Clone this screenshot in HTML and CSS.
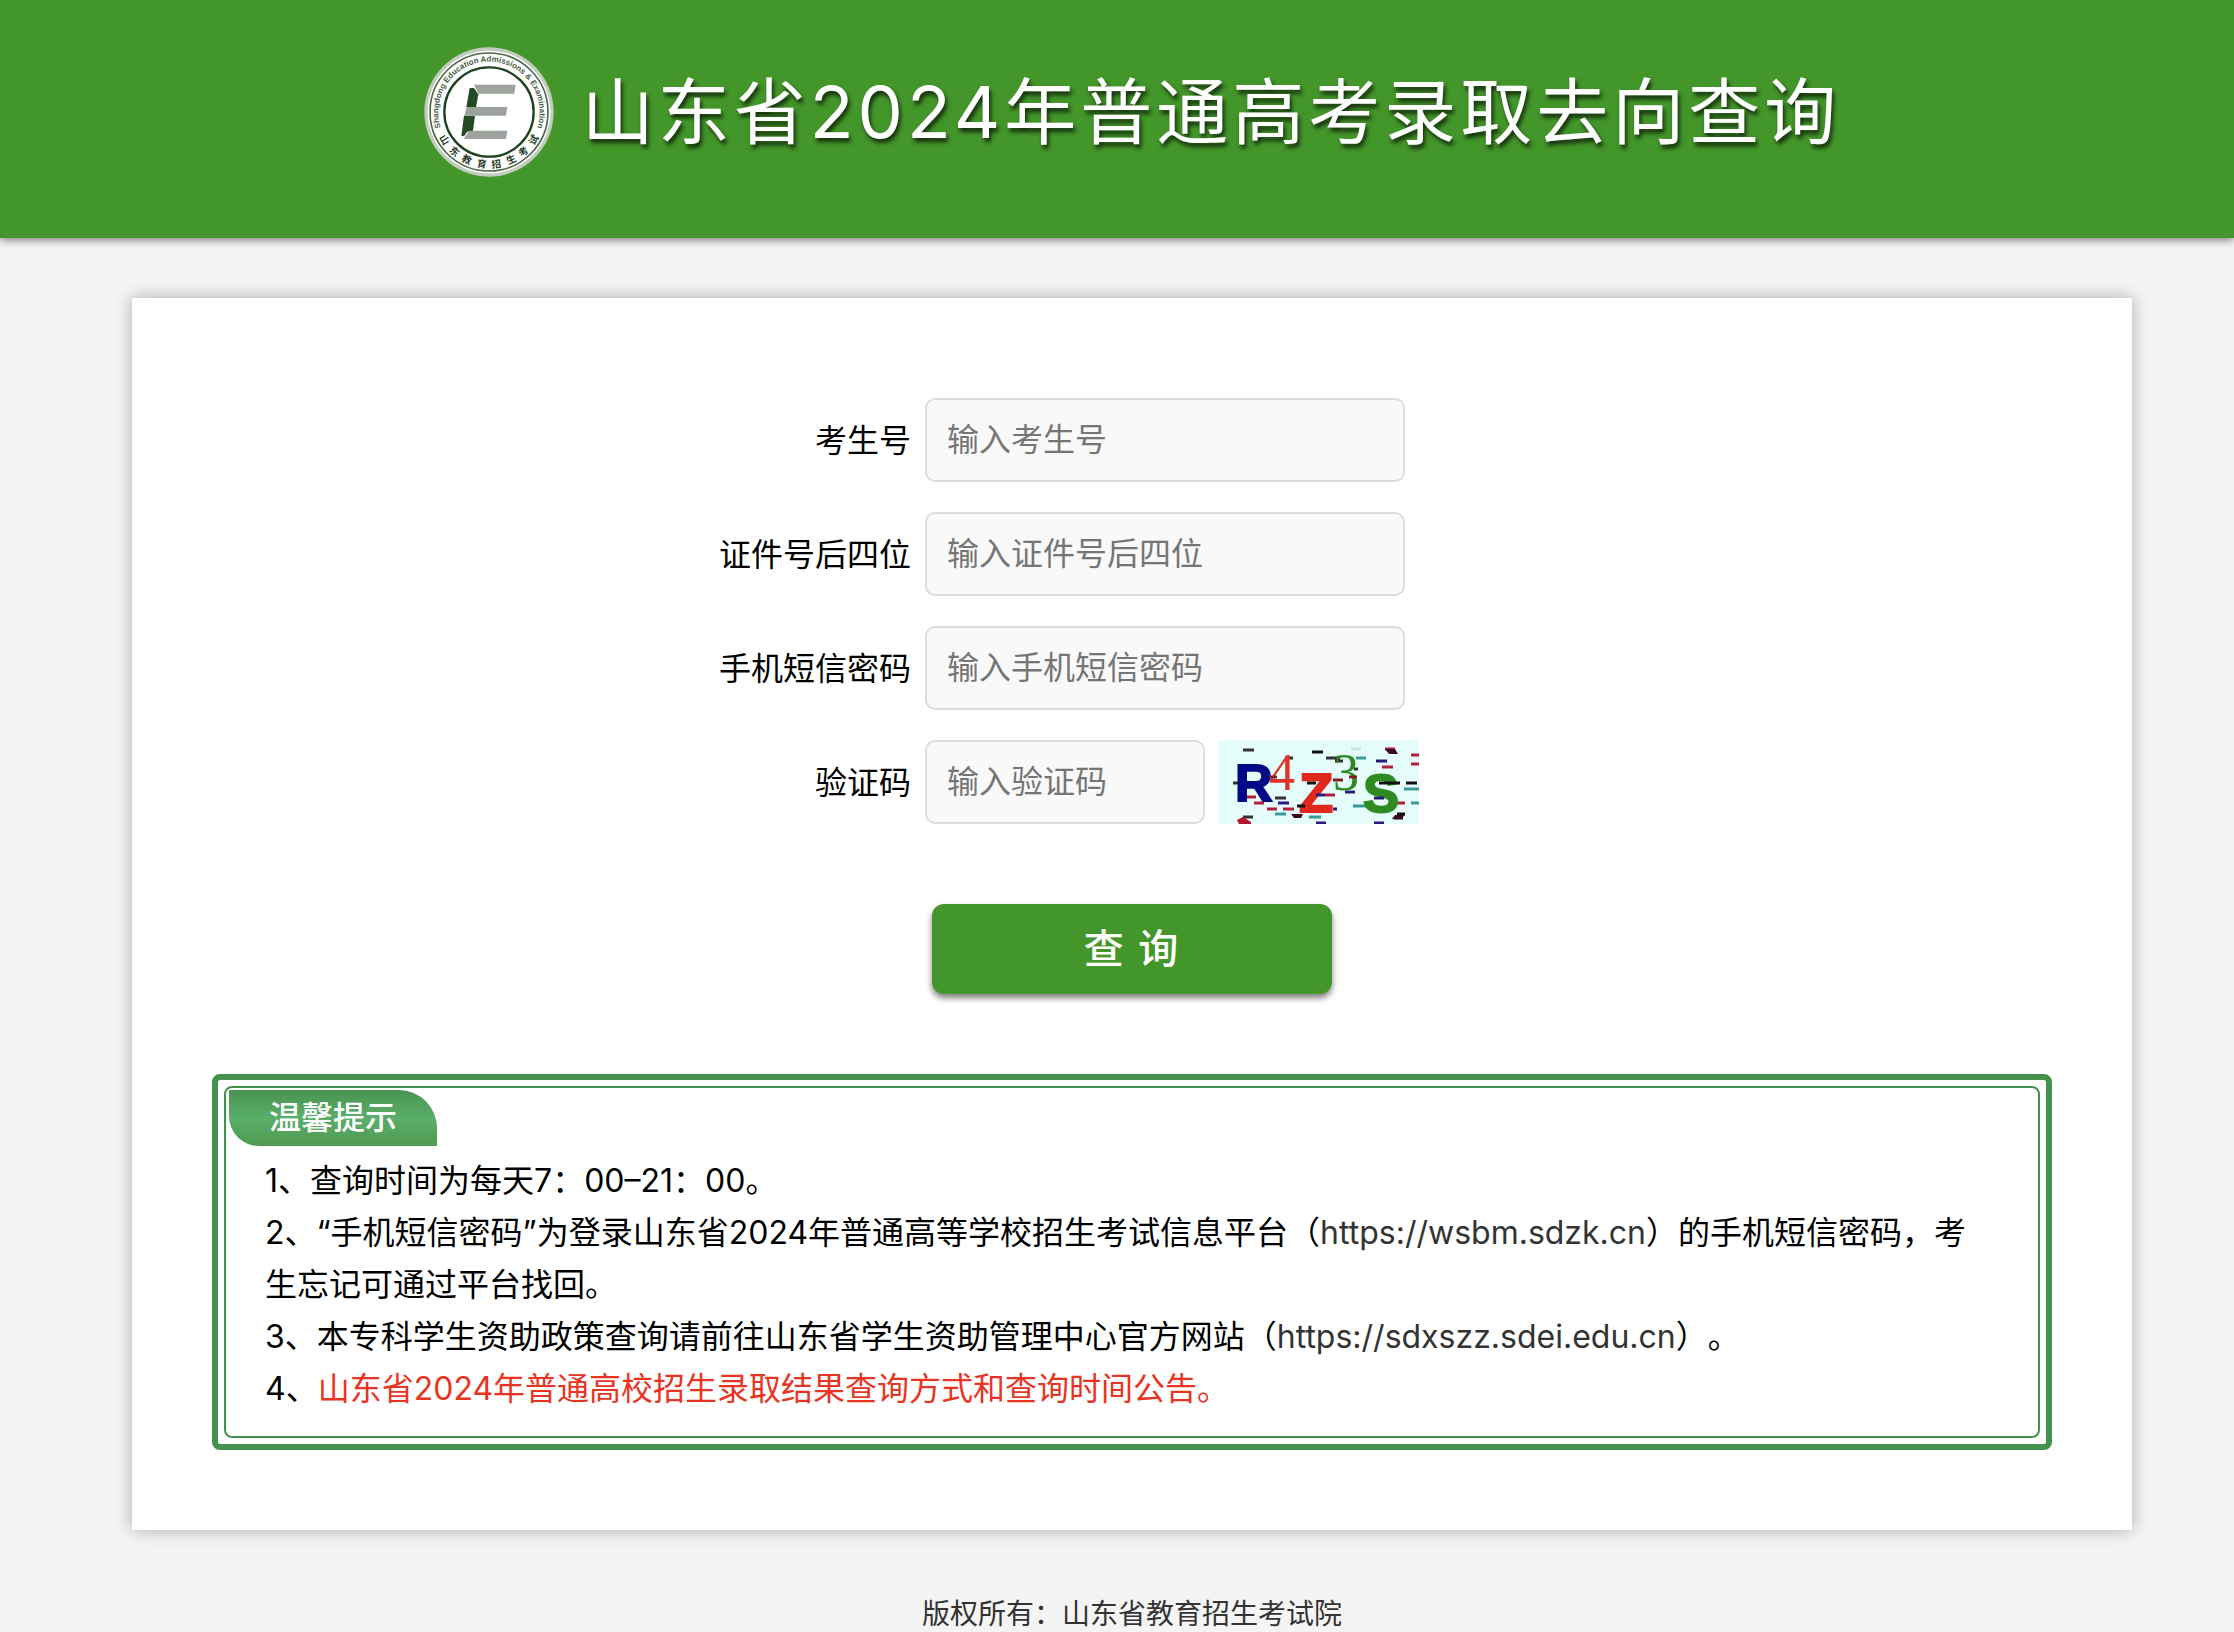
FILE: index.html
```html
<!DOCTYPE html>
<html lang="zh-CN">
<head>
    <meta charset="UTF-8">
    <meta name="viewport" content="width=device-width, initial-scale=1.0">
    <title>山东省2024年普通高考录取去向查询</title>
    <link rel="stylesheet" href="styles.css">
</head>
<body>

    <header class="header">
        <svg class="logo" viewBox="0 0 390 390" role="img" aria-label="山东省教育招生考试院">
            <defs>
                <path id="ring" d="M 51.5 246 A 152 152 0 1 1 338.5 246"/>
            </defs>
            <circle cx="195" cy="195" r="194" fill="#c3cdbf"/>
            <circle cx="195" cy="195" r="184" fill="#fff"/>
            <circle cx="195" cy="195" r="177" fill="none" stroke="#4c6849" stroke-width="5"/>
            <circle cx="195" cy="195" r="134" fill="none" stroke="#1f4220" stroke-width="7"/>
            <text class="ring-en"><textPath href="#ring" startOffset="50%" text-anchor="middle">Shangdong Education Admissions &amp; Examination</textPath></text>
            <g class="ring-cn">
                <text x="195" y="363" transform="rotate(58 195 195)">山</text>
                <text x="195" y="363" transform="rotate(41 195 195)">东</text>
                <text x="195" y="363" transform="rotate(25 195 195)">教</text>
                <text x="195" y="363" transform="rotate(8 195 195)">育</text>
                <text x="195" y="363" transform="rotate(-8 195 195)">招</text>
                <text x="195" y="363" transform="rotate(-25 195 195)">生</text>
                <text x="195" y="363" transform="rotate(-41 195 195)">考</text>
                <text x="195" y="363" transform="rotate(-58 195 195)">试</text>
            </g>
            <g fill="#234a22">
                <path d="M137 123 L150 123 L163 142 L156 181 L127 181 Z"/>
                <path d="M120 206 L153 206 L147 251 L130 254 L120 268 L112 266 Z"/>
            </g>
            <g fill="#9ca39c">
                <path d="M150 113 H275 L271 140 H164 Z"/>
                <path d="M128 180 H250 L246 206 H121 Z"/>
                <path d="M136 251 H250 L246 276 H119 Z"/>
            </g>
        </svg>
        <h1 class="title">山东省2024年普通高考录取去向查询</h1>
    </header>

    <div class="wrap">
        <main class="card">
            <form class="form">
                <div class="row">
                    <label for="ksh">考生号</label>
                    <input type="text" id="ksh" placeholder="输入考生号">
                </div>
                <div class="row">
                    <label for="zjh">证件号后四位</label>
                    <input type="text" id="zjh" placeholder="输入证件号后四位">
                </div>
                <div class="row">
                    <label for="dxmm">手机短信密码</label>
                    <input type="text" id="dxmm" placeholder="输入手机短信密码">
                </div>
                <div class="row">
                    <label for="yzm">验证码</label>
                    <input type="text" id="yzm" class="short" placeholder="输入验证码">
                    <svg class="captcha" viewBox="0 0 200 84" role="img" aria-label="验证码图片">
                        <rect width="200" height="84" fill="#e4fdfb"/>
                        <!-- noise -->
                        <g fill="none" stroke-width="3">
                            <path stroke="#333" d="M24 10h11M14 43h12M56 58h11M107 18h14M116 21h8M24 77h10M66 18h8M135 29h4"/>
                            <path stroke="#111" d="M93 12h11M187 43h11M175 78h9M178 74h8"/>
                            <path stroke="#2a1a80" d="M157 21h11M126 52h10M97 83h10M155 83h10M59 63h11"/>
                            <path stroke="#b0203a" d="M35 63h10M48 69h10M64 69h11M192 15h8M192 24h8M163 27h11M177 63h9M166 9h10M106 55h10M27 57h10"/>
                            <path stroke="#3b9a94" d="M56 74h11M137 18h10M185 49h15M192 63h8M134 66h14M90 77h12"/>
                            <path stroke="#cde4dc" d="M132 9h10"/>
                        </g>
                        <path fill="#b3142e" d="M18 80l6-3 8 5v2H20z"/>
                        <path fill="#3a0a20" d="M72 74h12l-2 4h-7zM176 75h10l-4 4h-9zM166 9h10l3 5h-9z"/>
                        <text class="bold" x="16" y="61" fill="#000a86" stroke="#000a86" font-size="52">R</text>
                        <text class="serif" x="50" y="50" fill="#e0332b" font-size="52">4</text>
                        <text class="bold" x="80" y="72" fill="#e0281e" stroke="#e0281e" font-size="56">Z</text>
                        <text class="serif" x="114" y="50" fill="#2c8a22" font-size="52">3</text>
                        <text class="bold" x="144" y="72" fill="#2f8a22" stroke="#2f8a22" font-size="54">S</text>
                        <g fill="none" stroke-width="3">
                            <path stroke="#2a1a80" d="M97 55h9M155 58h10M114 69h4"/>
                            <path stroke="#111" d="M160 43h21M88 43h9M78 66h8"/>
                            <path stroke="#7a1f2a" d="M50 37h8M114 40h10M130 37h8"/>
                        </g>
                    </svg>
                </div>
                <button type="button" class="btn">查 询</button>
            </form>

            <section class="tips">
                <div class="tips-inner">
                    <h2 class="tips-title">温馨提示</h2>
                    <div class="tips-text">
                        <p>1、查询时间为每天7：00–21：00。</p>
                        <p>2、“手机短信密码”为登录山东省2024年普通高等学校招生考试信息平台（<a href="https://wsbm.sdzk.cn">https://wsbm.sdzk.cn</a>）的手机短信密码，考生忘记可通过平台找回。</p>
                        <p>3、本专科学生资助政策查询请前往山东省学生资助管理中心官方网站（<a href="https://sdxszz.sdei.edu.cn">https://sdxszz.sdei.edu.cn</a>）。</p>
                        <p>4、<a class="red" href="#">山东省2024年普通高校招生录取结果查询方式和查询时间公告。</a></p>
                    </div>
                </div>
            </section>
        </main>

        <footer class="footer">版权所有：山东省教育招生考试院</footer>
    </div>

</body>
</html>
```

FILE: styles.css
```css
* {
    margin: 0;
    padding: 0;
    box-sizing: border-box;
}

body {
    background-color: #f4f4f4;
    color: #000;
    font-family: Inter, "Noto Sans CJK SC", sans-serif;
    font-size: 32px;
    text-spacing-trim: space-all;
}

a {
    color: #333;
    text-decoration: none;
}

/* header */
.header {
    display: flex;
    justify-content: center;
    align-items: center;
    gap: 28px;
    padding: 47px 0 61px 30px;
    background-color: #43962a;
    box-shadow: 0 2px 8px rgba(0, 0, 0, 0.5);
}

.logo {
    width: 130px;
    height: 130px;
    flex-shrink: 0;
}

.ring-en {
    font-family: "Liberation Sans", sans-serif;
    font-size: 24px;
    font-weight: bold;
    fill: #3f5c3e;
}

.ring-cn {
    font-family: "Noto Sans CJK SC", sans-serif;
    font-size: 29px;
    font-weight: bold;
    text-anchor: middle;
    fill: #1f3a1f;
}

.title {
    color: #fff;
    font-size: 72px;
    font-weight: normal;
    line-height: 100px;
    letter-spacing: 4px;
    text-shadow: 2px 4px 4px rgba(0, 0, 0, 0.7);
}

/* main */
.wrap {
    padding: 60px 102px 0 132px;
}

.card {
    max-width: 2000px;
    margin: 0 auto;
    padding: 100px 80px 80px;
    background-color: #fff;
    box-shadow: 0 0 16px rgba(0, 0, 0, 0.3);
}

.form {
    display: flex;
    flex-direction: column;
    align-items: center;
    gap: 30px;
}

.row {
    display: flex;
    align-items: center;
    gap: 14px;
    width: 826px;
}

.row label {
    width: 192px;
    padding-bottom: 4px;
    text-align: right;
    white-space: nowrap;
}

.row input {
    width: 480px;
    height: 84px;
    padding: 0 20px 2px;
    border: 2px solid #ddd;
    border-radius: 10px;
    outline: 0;
    background-color: #f9f9f9;
    font-family: inherit;
    font-size: 32px;
}

.row input::placeholder {
    color: #757575;
}

.row input.short {
    width: 280px;
}

.captcha {
    width: 200px;
    height: 84px;
}

.captcha .bold {
    font-family: "Liberation Sans", sans-serif;
    font-weight: bold;
    stroke-width: 2px;
}

.captcha .serif {
    font-family: "Liberation Serif", serif;
}

.btn {
    width: 400px;
    height: 90px;
    margin-top: 50px;
    padding-bottom: 6px;
    border: 0;
    border-radius: 12px;
    background-color: #43962a;
    box-shadow: 0 4px 6px rgba(0, 0, 0, 0.5);
    color: #fff;
    font-family: inherit;
    font-size: 40px;
    font-weight: 500;
    letter-spacing: 2px;
    cursor: pointer;
}

/* tips */
.tips {
    margin-top: 80px;
    padding: 6px;
    border: 6px solid #43914a;
    border-radius: 8px;
}

.tips-inner {
    padding: 2px 3px 21px;
    border: 2px solid #43914a;
    border-radius: 8px;
}

.tips-title {
    width: 208px;
    color: #fff;
    background: linear-gradient(#4a9350, #5aae6a 50%, #4f9a50);
    border-radius: 0 38px 0 30px;
    font-size: 32px;
    font-weight: 500;
    line-height: 56px;
    text-align: center;
}

.tips-text {
    padding: 9px 38px 0 36px;
}

.tips-text p {
    line-height: 52px;
}

.tips-text .red {
    color: #e93323;
}

.footer {
    padding-top: 68px;
    color: #333;
    font-size: 28px;
    line-height: 32px;
    text-align: center;
    overflow: hidden;
}
```
